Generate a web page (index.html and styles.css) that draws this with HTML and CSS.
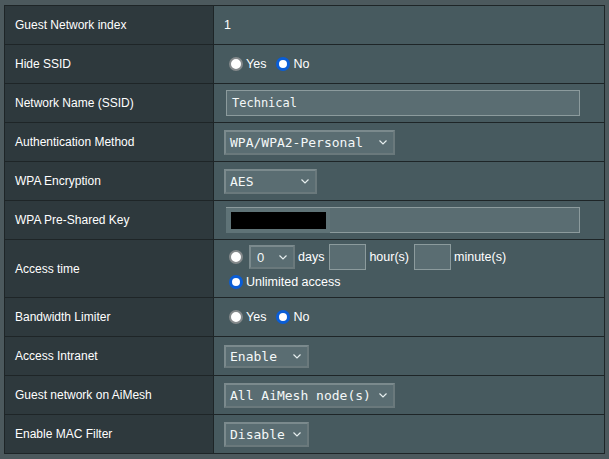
FILE: index.html
```html
<!DOCTYPE html>
<html lang="en">
<head>
    <meta charset="UTF-8">
    <meta name="viewport" content="width=device-width, initial-scale=1.0">
    <title>Guest Network</title>
    <link rel="stylesheet" href="styles.css">
</head>
<body>

<div class="settings">
    <div class="label">Guest Network index</div>
    <div class="value">1</div>

    <div class="label">Hide SSID</div>
    <div class="value">
        <label class="radio"><input type="radio" name="hide"> Yes</label>
        <label class="radio"><input type="radio" name="hide" checked> No</label>
    </div>

    <div class="label">Network Name (SSID)</div>
    <div class="value">
        <div class="text-field wide">Technical</div>
    </div>

    <div class="label">Authentication Method</div>
    <div class="value">
        <div class="select w171"><span>WPA/WPA2-Personal</span><svg width="8" height="5" viewBox="0 0 8 5"><path d="M0.5 0.5 L4 4 L7.5 0.5" fill="none" stroke="#e6eeee" stroke-width="1.2"/></svg></div>
    </div>

    <div class="label">WPA Encryption</div>
    <div class="value">
        <div class="select w93"><span>AES</span><svg width="8" height="5" viewBox="0 0 8 5"><path d="M0.5 0.5 L4 4 L7.5 0.5" fill="none" stroke="#e6eeee" stroke-width="1.2"/></svg></div>
    </div>

    <div class="label">WPA Pre-Shared Key</div>
    <div class="value">
        <div class="text-field wide key"><span class="masked"></span></div>
    </div>

    <div class="label tall">Access time</div>
    <div class="value tall stack">
        <div class="line">
            <input type="radio" name="access">
            <div class="select w46 small"><span>0</span><svg width="8" height="5" viewBox="0 0 8 5"><path d="M0.5 0.5 L4 4 L7.5 0.5" fill="none" stroke="#e6eeee" stroke-width="1.2"/></svg></div>
            <span class="unit">days</span>
            <div class="box"></div>
            <span class="unit">hour(s)</span>
            <div class="box"></div>
            <span class="unit">minute(s)</span>
        </div>
        <label class="radio"><input type="radio" name="access" checked> Unlimited access</label>
    </div>

    <div class="label">Bandwidth Limiter</div>
    <div class="value">
        <label class="radio"><input type="radio" name="bw"> Yes</label>
        <label class="radio"><input type="radio" name="bw" checked> No</label>
    </div>

    <div class="label">Access Intranet</div>
    <div class="value">
        <div class="select w85 short"><span>Enable</span><svg width="8" height="5" viewBox="0 0 8 5"><path d="M0.5 0.5 L4 4 L7.5 0.5" fill="none" stroke="#e6eeee" stroke-width="1.2"/></svg></div>
    </div>

    <div class="label">Guest network on AiMesh</div>
    <div class="value">
        <div class="select w171"><span>All AiMesh node(s)</span><svg width="8" height="5" viewBox="0 0 8 5"><path d="M0.5 0.5 L4 4 L7.5 0.5" fill="none" stroke="#e6eeee" stroke-width="1.2"/></svg></div>
    </div>

    <div class="label">Enable MAC Filter</div>
    <div class="value">
        <div class="select w85"><span>Disable</span><svg width="8" height="5" viewBox="0 0 8 5"><path d="M0.5 0.5 L4 4 L7.5 0.5" fill="none" stroke="#e6eeee" stroke-width="1.2"/></svg></div>
    </div>
</div>

</body>
</html>
```

FILE: styles.css
```css
body {
    margin: 5px 0 0 4px;
    background-color: #4c595d;
    font-family: 'Liberation Sans', Arial, sans-serif;
    font-size: 12px;
    color: #ffffff;
}

/* Tabela de configuração: as linhas de grelha fazem de bordas */
.settings {
    display: grid;
    grid-template-columns: 208px 390px;
    gap: 1px;
    width: 599px;
    background-color: #1e2527;
    border: 1px solid #1e2527;
}

.label {
    background-color: #2e393d;
    height: 38px;
    padding-left: 10px;
    display: flex;
    align-items: center;
}

.value {
    background-color: #475a5f;
    height: 38px;
    padding-left: 10px;
    display: flex;
    align-items: center;
    font-size: 12.5px;
    box-sizing: border-box;
}

.tall {
    height: 57px;
}

.stack {
    flex-direction: column;
    align-items: flex-start;
    justify-content: flex-start;
    padding-top: 4px;
}

.line {
    display: flex;
    align-items: center;
    height: 26px;
}

.radio {
    display: flex;
    align-items: center;
    margin-right: 5px;
}

.stack .radio {
    margin-top: 5px;
}

/* Botões de rádio desenhados à mão */
input[type="radio"] {
    appearance: none;
    box-sizing: border-box;
    width: 14px;
    height: 14px;
    margin: 0 3px 0 5px;
    border-radius: 50%;
    border: 2px solid #84898b;
    background-color: #ffffff;
}

input[type="radio"]:checked {
    border: 3px solid #0a5dd6;
}

.line input[type="radio"] {
    margin-right: 6px;
}

.text-field {
    box-sizing: border-box;
    height: 26px;
    margin-left: 2px;
    border: 1px solid #8c9b9d;
    background-color: #5a6d72;
    font-family: 'DejaVu Sans Mono', monospace;
    font-size: 12px;
    padding-left: 5px;
    display: flex;
    align-items: center;
    color: #f4f8f8;
}

.wide {
    width: 354px;
}

.key {
    padding-left: 0;
    border-left: none;
}

.masked {
    display: block;
    width: 95px;
    height: 17px;
    background-color: #000000;
    border: 5px solid #5f7377;
    border-width: 4px 4px 4px 5px;
}

.select {
    box-sizing: border-box;
    height: 25px;
    display: flex;
    align-items: center;
    justify-content: space-between;
    padding: 0 6px 0 4px;
    background-color: #5a6d72;
    border: 2px solid #7b8a8d;
    border-right-color: #6a797c;
    border-bottom-color: #6a797c;
    font-family: 'DejaVu Sans Mono', monospace;
    font-size: 13px;
    color: #f4f8f8;
}

.select.short {
    height: 23px;
}

.select.small {
    height: 24px;
    padding-left: 6px;
    font-family: 'Liberation Sans', Arial, sans-serif;
    font-size: 13px;
}

.w171 { width: 171px; }
.w93 { width: 93px; }
.w85 { width: 85px; }
.w46 { width: 46px; }

.unit {
    margin: 0 5px 0 3px;
}

.box {
    box-sizing: border-box;
    width: 37px;
    height: 26px;
    border: 1px solid #8c9b9d;
    background-color: #5a6d72;
}
```
